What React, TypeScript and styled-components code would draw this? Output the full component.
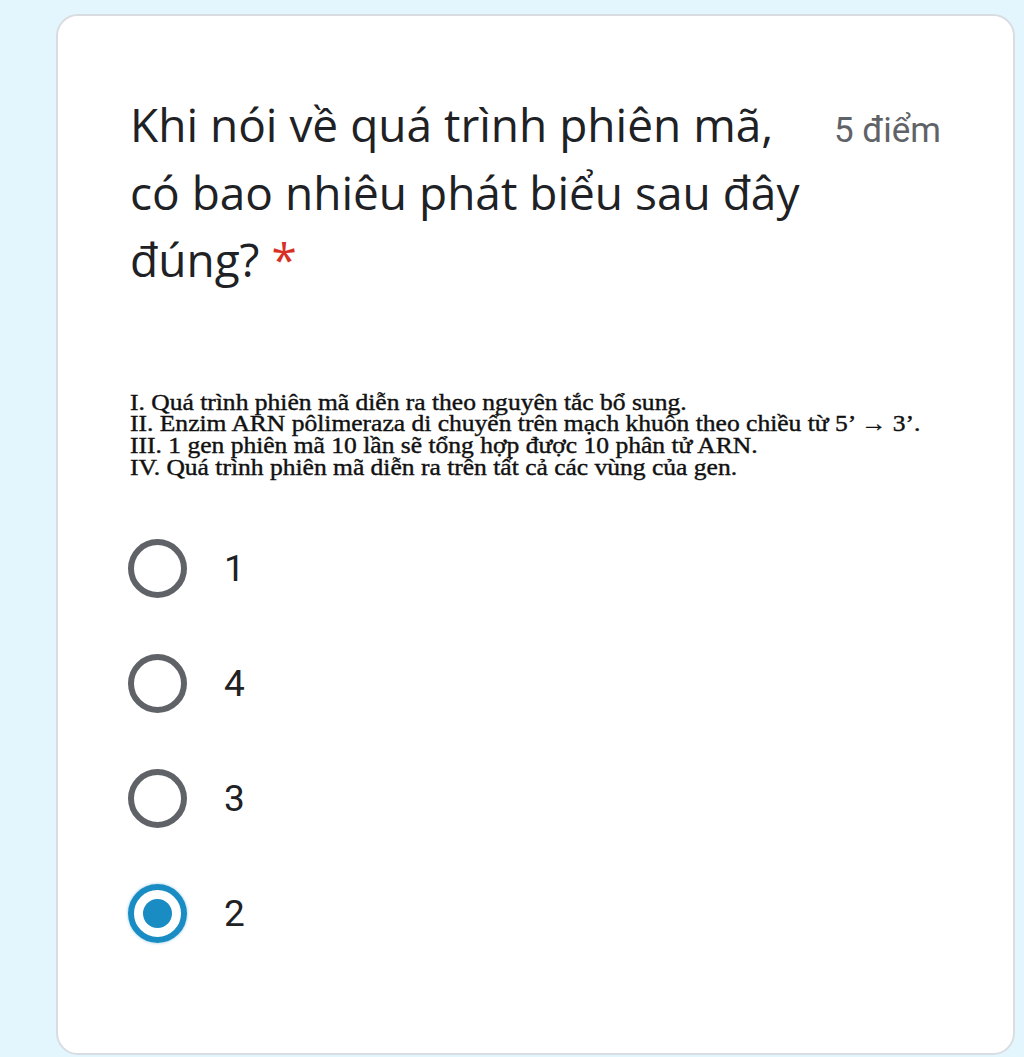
import React from "react";
import styled, { createGlobalStyle } from "styled-components";

const Global = createGlobalStyle`
  html, body { margin: 0; padding: 0; background: #e3f5fd; }
  body { width: 1024px; height: 1057px; overflow: hidden; }
`;

const Page = styled.div`
  padding: 14px 8px 0 56px;
  box-sizing: border-box;
  height: 1057px;
`;

const Card = styled.div`
  width: 959px;
  height: 1041px;
  box-sizing: border-box;
  background: #fff;
  border: 2px solid #d9dde1;
  border-radius: 22px;
  padding: 75px 60px 0 72px;
`;

const Header = styled.div`
  display: flex;
  align-items: baseline;
  justify-content: space-between;
`;

const Title = styled.div`
  width: 684px;
  font-family: "Open Sans", sans-serif;
  font-size: 46px;
  line-height: 67.5px;
  color: #202124;
`;

const Required = styled.span`
  color: #d93025;
`;

const Points = styled.div`
  font-family: Roboto, sans-serif;
  font-size: 35px;
  line-height: 67px;
  color: #5f6368;
  margin-right: 12px;
`;

const Statements = styled.div`
  margin-top: 98px;
  font-family: "Liberation Serif", serif;
  font-size: 23px;
  line-height: 21.8px;
  color: #111;
  -webkit-text-stroke: 0.4px #111;
  transform: scaleX(1.11);
  transform-origin: left center;
`;

const Options = styled.div`
  margin-top: 60px;
  display: flex;
  flex-direction: column;
  gap: 55px;
  margin-left: -2px;
`;

const Option = styled.label`
  display: flex;
  align-items: center;
  gap: 37px;
  height: 60px;
`;

const Radio = styled.span<{ $checked?: boolean }>`
  width: 59px;
  height: 59px;
  box-sizing: border-box;
  border-radius: 50%;
  border: 6px solid ${(p) => (p.$checked ? "#1a8cc4" : "#5f6368")};
  display: flex;
  align-items: center;
  justify-content: center;
  box-shadow: ${(p) => (p.$checked ? "0 0 3px rgba(26,140,196,0.5)" : "none")};
`;

const Dot = styled.span`
  width: 29px;
  height: 29px;
  border-radius: 50%;
  background: #1a8cc4;
`;

const OptionText = styled.span`
  font-family: Roboto, sans-serif;
  font-size: 37px;
  color: #202124;
`;

const options = [
  { label: "1", checked: false },
  { label: "4", checked: false },
  { label: "3", checked: false },
  { label: "2", checked: true },
];

export default function App() {
  return (
    <Page>
      <Global />
      <Card>
        <Header>
          <Title>
            Khi nói về quá trình phiên mã, có bao nhiêu phát biểu sau đây đúng? <Required>*</Required>
          </Title>
          <Points>5 điểm</Points>
        </Header>
        <Statements>
          <div>I. Quá trình phiên mã diễn ra theo nguyên tắc bổ sung.</div>
          <div>II. Enzim ARN pôlimeraza di chuyển trên mạch khuôn theo chiều từ 5’ → 3’.</div>
          <div>III. 1 gen phiên mã 10 lần sẽ tổng hợp được 10 phân tử ARN.</div>
          <div>IV. Quá trình phiên mã diễn ra trên tất cả các vùng của gen.</div>
        </Statements>
        <Options>
          {options.map((o) => (
            <Option key={o.label}>
              <Radio $checked={o.checked}>{o.checked && <Dot />}</Radio>
              <OptionText>{o.label}</OptionText>
            </Option>
          ))}
        </Options>
      </Card>
    </Page>
  );
}
